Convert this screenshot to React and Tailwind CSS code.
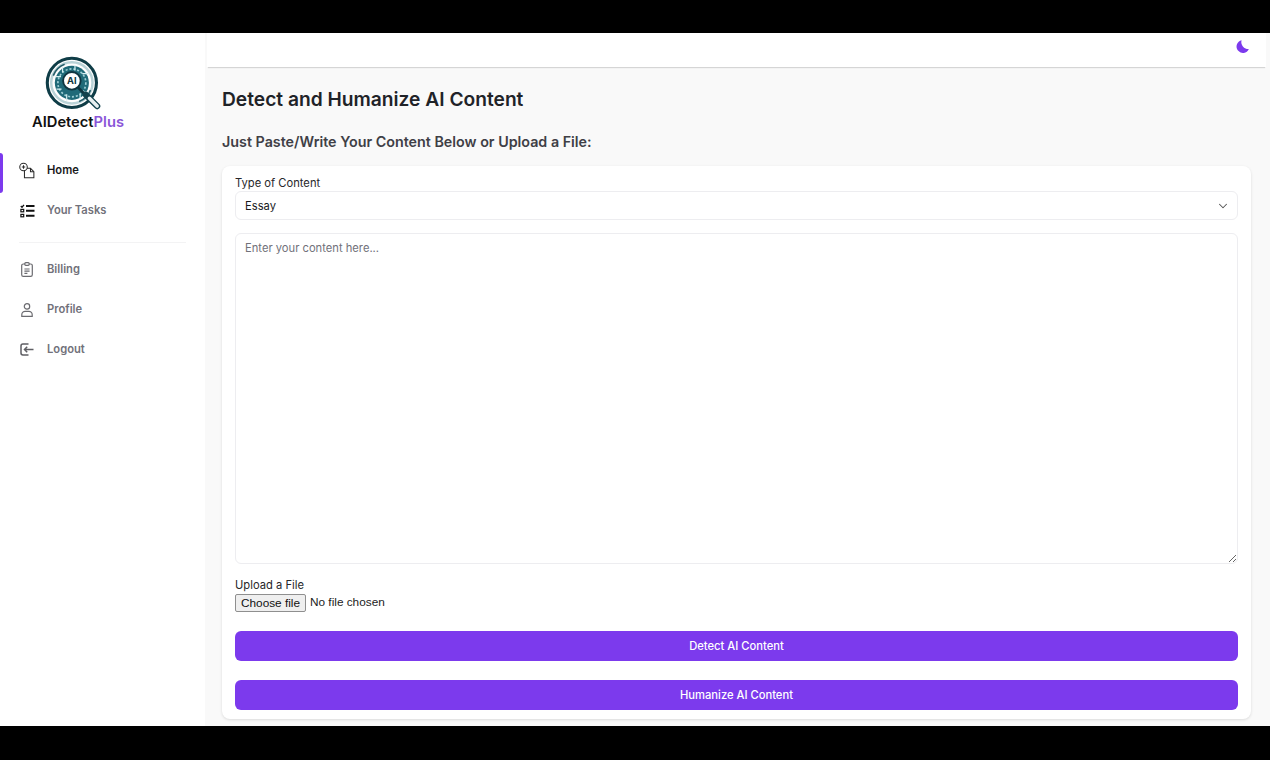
import React from 'react';
import { ChevronDown } from 'lucide-react';

const Logo = () => (
  <svg width="62" height="62" viewBox="0 0 60 60" fill="none" className="block">
    <circle cx="26" cy="26" r="23.8" fill="#fff" stroke="#0f3d47" strokeWidth="3" />
    <circle cx="26" cy="26" r="20" stroke="#b9d3d7" strokeWidth="2.4" />
    <path d="M8 19A19 19 0 0 1 19 8M44 33A19 19 0 0 1 33 44" stroke="#28606c" strokeWidth="1.6" />
    <circle cx="26" cy="26" r="16.500" fill="#1f6a78" />
    <circle cx="26" cy="26" r="13.500" stroke="#9fd0d6" strokeWidth="1.6" strokeDasharray="2 1.800" />
    <path d="M10.500 20h5M11 32h5M36 17h6M37 35h5M17 11v5M34 37v5M21 37v6M29 9v5" stroke="#d5eef0" strokeWidth="1.2" />
    <circle cx="26" cy="24" r="8.500" fill="#fff" stroke="#0f3540" strokeWidth="1.800" />
    <text x="26" y="27.300" textAnchor="middle" fontSize="9" fontWeight="700" fill="#0f3540" fontFamily="Inter, sans-serif">AI</text>
    <path d="M32 30.500l7 7" stroke="#0f3540" strokeWidth="2.500" />
    <path d="M39.500 37.500l11 11" stroke="#12424d" strokeWidth="6" strokeLinecap="round" />
    <path d="M43 41l7.500 7.500" stroke="#e8f0f1" strokeWidth="3.400" strokeLinecap="round" />
  </svg>
);

const HomeIcon = () => (
  <svg width="17" height="17" viewBox="0 0 17 17" fill="none" stroke="#2a2a2a" strokeWidth="1.100" className="block">
    <circle cx="4.800" cy="4.800" r="4" />
    <path d="M4.800 3v3.600M3 4.800h3.600" />
    <path d="M8.600 6.200h3.600l3.600 3.600v6.400H5.800V8.800" />
    <path d="M12.200 6.200v3.600h3.600" />
  </svg>
);

const TasksIcon = () => (
  <svg width="15" height="14" viewBox="0 0 15 14" fill="none" stroke="#111" className="block">
    <path d="M.8 2l1.200 1.200L4 .8" strokeWidth="1.300" />
    <rect x=".9" y="5.400" width="2.800" height="2.400" strokeWidth="1.200" />
    <rect x=".9" y="10.400" width="2.800" height="2.400" strokeWidth="1.200" />
    <path d="M6 2h8.500M6 6.800h8.500M6 11.800h8.500" strokeWidth="1.900" />
  </svg>
);

const BillingIcon = () => (
  <svg width="12" height="15" viewBox="0 0 12 15" fill="none" stroke="#6b6b70" strokeWidth="1.200" className="block">
    <rect x=".7" y="2" width="10.600" height="12.300" rx="1.600" />
    <rect x="3.800" y=".7" width="4.400" height="2.600" rx="1" fill="#fff" />
    <path d="M3.400 7h5.200M3.400 9.200h5.200M3.400 11.400h3" />
  </svg>
);

const ProfileIcon = () => (
  <svg width="12" height="14" viewBox="0 0 12 14" fill="none" stroke="#6b6b70" strokeWidth="1.200" className="block">
    <circle cx="6" cy="3.400" r="2.700" />
    <path d="M.8 13.300v-1.600c0-2 1.800-3.300 3.200-3.300h4c1.400 0 3.200 1.300 3.200 3.300v1.600z" />
  </svg>
);

const LogoutIcon = () => (
  <svg width="14" height="13" viewBox="0 0 14 13" fill="none" stroke="#5f5f64" strokeWidth="1.500" className="block">
    <path d="M8.500 1H2.900C1.800 1 1 1.800 1 2.900v7.200c0 1.100.8 1.900 1.900 1.900h5.600" />
    <path d="M13.500 6.500H4.500M7.200 3.800L4.500 6.500l2.700 2.700" />
  </svg>
);

const NavItem = ({ icon, label, active }) => (
  <div className="relative flex h-[40px] items-center pb-[5px] pl-[19px]">
    {active && <div className="absolute left-0 top-0 h-full w-[3px] rounded-r bg-[#7c3aed]" />}
    <div className="flex w-[16px] justify-center">{icon}</div>
    <span className={`ml-[12px] text-[11.200px] font-semibold ${active ? 'text-[#18181b]' : 'text-[#71717a]'}`}>
      {label}
    </span>
  </div>
);

export default function App() {
  return (
    <div className="flex h-screen flex-col overflow-hidden bg-black font-['Inter',sans-serif]">
      <div className="h-[33px] shrink-0" />

      <div className="flex min-h-0 flex-1 bg-white">
        <aside className="w-[205px] shrink-0 bg-white">
          <div className="flex flex-col items-center pr-[49px] pt-[23px]">
            <div className="ml-[-4px]">
              <Logo />
            </div>
            <div className="mt-[-5px] text-[14.700px] font-semibold leading-[18px] text-[#111]">
              AIDetect<span className="text-[#8a56d8]">Plus</span>
            </div>
          </div>

          <nav className="mt-[22px]">
            <NavItem icon={<HomeIcon />} label="Home" active />
            <NavItem icon={<TasksIcon />} label="Your Tasks" />
            <div className="mx-[19px] my-[9px] h-px bg-[#f3f3f4]" />
            <NavItem icon={<BillingIcon />} label="Billing" />
            <NavItem icon={<ProfileIcon />} label="Profile" />
            <NavItem icon={<LogoutIcon />} label="Logout" />
          </nav>
        </aside>

        <div className="flex min-w-0 flex-1 flex-col bg-[#f9f9f9]">
          <header className="ml-[2px] mr-[4px] flex h-[34px] shrink-0 items-start justify-end bg-white pr-[17px] pt-[7px] shadow-[0_2px_1px_-1px_rgba(0,0,0,0.14)]">
            <svg width="13" height="13" viewBox="0 0 14 14" className="block">
              <path d="M6 .3A6.900 6.900 0 1 0 13.800 9.800 7.500 7.500 0 0 1 6 .3z" fill="#7c3aed" />
            </svg>
          </header>

          <main className="flex min-h-0 flex-1 flex-col pl-[17px] pr-[19px]">
            <h1 className="mt-[19px] text-[19.200px] font-semibold leading-[26px] text-[#1f2328]">
              Detect and Humanize AI Content
            </h1>
            <h2 className="mt-[20px] text-[14.300px] font-semibold leading-[20px] text-[#3f3f46]">
              Just Paste/Write Your Content Below or Upload a File:
            </h2>

            <div className="mt-[14px] rounded-lg bg-white px-[13px] pb-[9px] pt-[10px] shadow-[0_1px_3px_rgba(0,0,0,0.12)]">
              <label className="block text-[11.200px] leading-[15px] text-[#27272a]">Type of Content</label>
              <div className="relative">
                <select className="block h-[29px] w-full appearance-none rounded-md border border-[#ededf0] bg-white pl-[9px] pt-[1px] text-[11.200px] text-[#18181b] outline-none">
                  <option>Essay</option>
                </select>
                <ChevronDown size={14} strokeWidth={1.800} className="absolute right-[8px] top-[8px] text-[#555]" />
              </div>

              <textarea
                placeholder="Enter your content here..."
                className="mt-[13px] block h-[331px] w-full rounded-md border border-[#ededf0] bg-white px-[9px] py-[6px] text-[11.200px] leading-[16px] outline-none placeholder:text-[#71717a]"
              />

              <label className="mt-[14px] block text-[11.200px] leading-[15px] text-[#27272a]">Upload a File</label>
              <div className="mt-[1px] flex h-[18px] items-center font-['Liberation_Sans',sans-serif] text-[11.800px] text-[#222]">
                <button type="button" className="h-[18px] w-[71px] rounded-[2px] border border-[#8f8f8f] bg-[#efefef] text-[#111]">
                  Choose file
                </button>
                <span className="ml-[4px]">No file chosen</span>
              </div>

              <button className="mt-[19px] block h-[30px] w-full rounded-md bg-[#7c3aed] text-[11.200px] font-medium text-white">
                Detect AI Content
              </button>
              <button className="mt-[19px] block h-[30px] w-full rounded-md bg-[#7c3aed] text-[11.200px] font-medium text-white">
                Humanize AI Content
              </button>
            </div>
          </main>
        </div>
      </div>

      <div className="h-[34px] shrink-0" />
    </div>
  );
}
